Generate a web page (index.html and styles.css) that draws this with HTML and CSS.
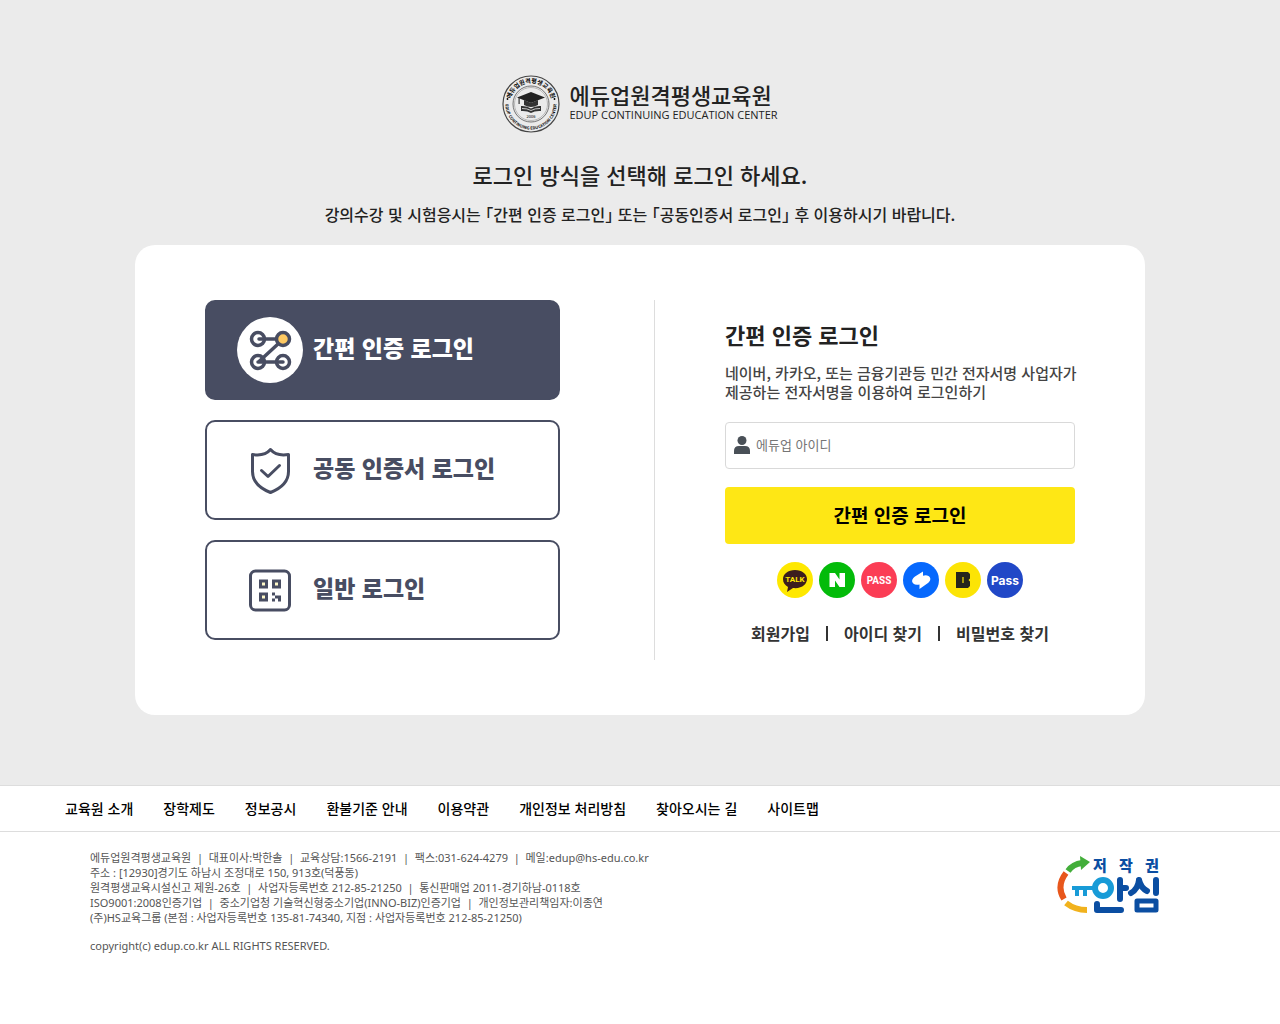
FILE: index.html
```
<!DOCTYPE html>
<html lang="ko">
<head>
    <meta charset="UTF-8">
    <meta name="viewport" content="width=device-width, initial-scale=1.0">
    <title>에듀업원격평생교육원 로그인</title>
    <link rel="stylesheet" href="styles.css">
</head>
<body>
    <main class="login">
        <a href="#" class="logo">
            <svg class="logo-mark" viewBox="0 0 58 58" aria-hidden="true">
                <defs>
                    <path id="arcTop" d="M8 29a21 21 0 0 1 42 0"/>
                    <path id="arcBottom" d="M3.500 29a25.500 25.500 0 0 0 51 0"/>
                </defs>
                <circle cx="29" cy="29" r="28" fill="none" stroke="#444" stroke-width="1.200"/>
                <circle cx="29" cy="29" r="18" fill="none" stroke="#555" stroke-width="0.800"/>
                <circle cx="29" cy="29" r="16.500" fill="none" stroke="#888" stroke-width="0.500"/>
                <text class="mark-kr"><textPath href="#arcTop" startOffset="50%" text-anchor="middle">에듀업원격평생교육원</textPath></text>
                <text class="mark-en"><textPath href="#arcBottom" startOffset="50%" text-anchor="middle">EDUP CONTINUING EDUCATION CENTER</textPath></text>
                <circle cx="5.500" cy="24" r="0.900"/>
                <circle cx="52.500" cy="24" r="0.900"/>
                <path d="M29 17 43 22.500 29 28 15 22.500z" fill="#222"/>
                <path d="M22 25v5q7 4 14 0v-5l-7 3zM16.500 23h1.200v6h-1.200z" fill="#333"/>
                <path d="M19 31q6-.5 10 2.500 4-3 10-2.500v5q-6-.5-10 2-4-2.500-10-2z" fill="#333"/>
                <path d="M20 33.500q5-.2 9 2 4-2.200 9-2" fill="none" stroke="#ebebeb" stroke-width="0.800"/>
                <text class="mark-year" x="29" y="43" text-anchor="middle">2006</text>
            </svg>
            <span class="logo-text">
                <strong>에듀업원격평생교육원</strong>
                <span>EDUP CONTINUING EDUCATION CENTER</span>
            </span>
        </a>

        <h1>로그인 방식을 선택해 로그인 하세요.</h1>
        <p class="guide">강의수강 및 시험응시는 「간편 인증 로그인」 또는 「공동인증서 로그인」 후 이용하시기 바랍니다.</p>

        <div class="card">
            <!-- 로그인 방식 -->
            <div class="methods">
                <button type="button" class="method active">
                    <svg viewBox="0 0 66 66" aria-hidden="true">
                        <circle cx="33" cy="33" r="33" fill="#fff"/>
                        <g fill="none" stroke="#484d62" stroke-width="3.500" stroke-linecap="round">
                            <circle cx="21" cy="22" r="6.500"/>
                            <circle cx="46" cy="22" r="6.500" fill="#ffca62"/>
                            <circle cx="21" cy="45" r="6.500"/>
                            <circle cx="46" cy="45" r="6.500"/>
                            <path d="M22 22h17M41 27 22 44.500M21 45h25"/>
                        </g>
                    </svg>
                    <span>간편 인증 로그인</span>
                </button>
                <button type="button" class="method">
                    <svg viewBox="0 0 66 66" aria-hidden="true">
                        <g fill="none" stroke="#484d62" stroke-width="3" stroke-linecap="round" stroke-linejoin="round">
                            <path d="M33.500 12.500q-6 7-18 5v17c0 10 8 17 18 21 10-4 18-11 18-21v-17q-12 2-18-5z"/>
                            <path d="M24.500 33.500 31 39.500 42.500 28.500"/>
                        </g>
                    </svg>
                    <span>공동 인증서 로그인</span>
                </button>
                <button type="button" class="method">
                    <svg viewBox="0 0 66 66" aria-hidden="true">
                        <g fill="none" stroke="#484d62" stroke-width="3">
                            <rect x="13.500" y="14" width="39" height="39" rx="5"/>
                            <rect x="23.500" y="24" width="6" height="6" fill="#fff9c8"/>
                            <rect x="36.500" y="24" width="6" height="6" fill="#fff9c8"/>
                            <rect x="23.500" y="37" width="6" height="6" fill="#fff9c8"/>
                        </g>
                        <path d="M35 35.500h3v3h-3zM38 38.500h6v6h-3v-3h-3zM35 41.500h3v3h-3z" fill="#484d62"/>
                    </svg>
                    <span>일반 로그인</span>
                </button>
            </div>

            <!-- 간편 인증 로그인 -->
            <form class="panel">
                <h2>간편 인증 로그인</h2>
                <p class="desc">네이버, 카카오, 또는 금융기관등 민간 전자서명 사업자가<br>제공하는 전자서명을 이용하여 로그인하기</p>

                <label class="field" for="userId">
                    <svg viewBox="0 0 16 18" role="img" aria-label="아이디">
                        <circle cx="8" cy="4.500" r="4.500"/>
                        <path d="M0 18v-3q0-5 5-5h6q5 0 5 5v3z"/>
                    </svg>
                    <input type="text" id="userId" name="userId" placeholder="에듀업 아이디">
                </label>
                <button type="submit" class="submit">간편 인증 로그인</button>

                <div class="providers">
                    <svg viewBox="0 0 36 36">
                        <circle cx="18" cy="18" r="18" fill="#fee800"/>
                        <path d="M18 8c-7 0-12 4-12 9 0 4 2 6 5 8l-1 5 6-4c9 1 14-4 14-9S25 8 18 8z" fill="#3c1e1e"/>
                        <text class="talk" x="18" y="20">TALK</text>
                    </svg>
                    <svg viewBox="0 0 36 36">
                        <circle cx="18" cy="18" r="18" fill="#03bb0a"/>
                        <path d="M10.500 11h5.500l4.500 6.500V11H26v14h-5.500L16 18.500V25h-5.500z" fill="#fff"/>
                    </svg>
                    <svg viewBox="0 0 36 36">
                        <circle cx="18" cy="18" r="18" fill="#fb3d55"/>
                        <text class="pass-red" x="18" y="22">PASS</text>
                    </svg>
                    <svg viewBox="0 0 36 36">
                        <circle cx="18" cy="18" r="18" fill="#0668fd"/>
                        <path d="M20 9.500v4.300q3-1.300 5.500.2c3 2 2 5-.5 7l-8.500 6V22.500q-4 1-6.200-1c-2.300-2.500-.8-5 1.700-7z" fill="#fff"/>
                    </svg>
                    <svg viewBox="0 0 36 36">
                        <circle cx="18" cy="18" r="18" fill="#fce405"/>
                        <path d="M11 10h12l2 2v4.500L23.500 18l1.500 1.500V24l-2 2H11z" fill="#24251c"/>
                        <path d="M18 15v6" stroke="#fce405" stroke-width="1.200"/>
                    </svg>
                    <svg viewBox="0 0 36 36">
                        <circle cx="18" cy="18" r="18" fill="#2148c7"/>
                        <text class="pass-blue" x="18" y="23">Pass</text>
                    </svg>
                </div>

                <nav class="links">
                    <a href="#">회원가입</a>
                    <a href="#">아이디 찾기</a>
                    <a href="#">비밀번호 찾기</a>
                </nav>
            </form>
        </div>
    </main>

    <footer>
        <nav class="footer-nav">
            <a href="#">교육원 소개</a>
            <a href="#">장학제도</a>
            <a href="#">정보공시</a>
            <a href="#">환불기준 안내</a>
            <a href="#">이용약관</a>
            <a href="#">개인정보 처리방침</a>
            <a href="#">찾아오시는 길</a>
            <a href="#">사이트맵</a>
        </nav>
        <div class="footer-info">
            <div>
                <address>
                    에듀업원격평생교육원 &nbsp;|&nbsp; 대표이사:박한솔 &nbsp;|&nbsp; 교육상담:1566-2191 &nbsp;|&nbsp; 팩스:031-624-4279 &nbsp;|&nbsp; 메일:edup@hs-edu.co.kr<br>
                    주소 : [12930]경기도 하남시 조정대로 150, 913호(덕풍동)<br>
                    원격평생교육시설신고 제원-26호 &nbsp;|&nbsp; 사업자등록번호 212-85-21250 &nbsp;|&nbsp; 통신판매업 2011-경기하남-0118호<br>
                    ISO9001:2008인증기업 &nbsp;|&nbsp; 중소기업청 기술혁신형중소기업(INNO-BIZ)인증기업 &nbsp;|&nbsp; 개인정보관리책임자:이종연<br>
                    (주)HS교육그룹 (본점 : 사업자등록번호 135-81-74340, 지점 : 사업자등록번호 212-85-21250)
                </address>
                <p class="copyright">copyright(c) edup.co.kr ALL RIGHTS RESERVED.</p>
            </div>
            <svg class="safe" viewBox="0 0 104 62">
                <g fill="none" stroke-width="6">
                    <path d="M12 18Q17 11 26 10" stroke="#43ae3a"/>
                    <path d="M10 20Q0 33 8 46" stroke="#e8571c"/>
                    <path d="M10 50Q19 57 31 57" stroke="#f1b21d"/>
                </g>
                <path d="M24 3 34 9 25 17z" fill="#43ae3a"/>
                <path d="M40 33v4H31v6h-4v-6h-4v6h-4v-6h-3v-4z" fill="#189bd7"/>
                <circle cx="47" cy="35" r="8" fill="none" stroke="#189bd7" stroke-width="6"/>
                <g fill="none" stroke="#0b4ea2" stroke-width="6" stroke-linecap="round" stroke-linejoin="round">
                    <path d="M64 27v19M65 35h5M41 51v6h24"/>
                    <path d="M83 27q-1 9-8 13M83 27q2 8 8 11M100 27v13"/>
                    <path d="M81 48h19v9H81z" stroke-width="5"/>
                </g>
                <text x="37" y="18">저</text>
                <text x="63" y="18">작</text>
                <text x="89" y="18">권</text>
            </svg>
        </div>
    </footer>
</body>
</html>
```

FILE: styles.css
```
* {
    box-sizing: border-box;
}

body {
    margin: 0;
    background-color: #fff;
    color: #222;
    font-family: "Noto Sans CJK KR", sans-serif;
}

h1, h2, p {
    margin: 0;
}

a {
    color: inherit;
    text-decoration: none;
}

button, input {
    font-family: inherit;
}

.login {
    display: flex;
    flex-direction: column;
    align-items: center;
    padding: 75px 20px 70px;
    background-color: #ebebeb;
}

/* Logo */
.logo {
    display: flex;
    align-items: center;
    gap: 9px;
}

.logo-mark {
    width: 58px;
    height: 58px;
}

.mark-kr {
    font-size: 6px;
    font-weight: bold;
}

.mark-en {
    font-size: 4px;
    font-weight: bold;
}

.mark-year {
    font-size: 4px;
}

.logo-text {
    display: flex;
    flex-direction: column;
    padding-bottom: 2px;
    font-family: "Open Sans", sans-serif;
    font-size: 11px;
    line-height: 18px;
}

.logo-text strong {
    font-family: "Noto Sans CJK KR", sans-serif;
    font-size: 22px;
    font-weight: 500;
    line-height: 24px;
}

h1 {
    margin-top: 23px;
    font-size: 22px;
    font-weight: 500;
    line-height: 36px;
}

.guide {
    margin-top: 10px;
    font-size: 16px;
    font-weight: 500;
    line-height: 24px;
    font-feature-settings: "halt";
}

/* Card */
.card {
    display: flex;
    justify-content: space-between;
    width: 100%;
    max-width: 1010px;
    margin-top: 19px;
    padding: 55px 70px;
    background-color: #fff;
    border-radius: 20px;
}

.methods {
    display: flex;
    flex-direction: column;
    gap: 20px;
    width: 355px;
}

.method {
    display: flex;
    align-items: center;
    gap: 10px;
    height: 100px;
    padding: 0 30px;
    border: 2px solid #484d62;
    border-radius: 10px;
    background-color: #fff;
    color: #484d62;
    font-size: 23px;
    font-weight: 900;
    cursor: pointer;
}

.method svg {
    width: 66px;
    height: 66px;
}

.method span {
    padding-bottom: 6px;
}

.method.active {
    background-color: #484d62;
    color: #fff;
}

.panel {
    width: 421px;
    height: 360px;
    padding: 19px 0 0 70px;
    border-left: 1px solid #ddd;
}

h2 {
    font-size: 22px;
    font-weight: bold;
    line-height: 30px;
}

.desc {
    margin: 14px 0 21px;
    color: #444;
    font-size: 15px;
    font-weight: 500;
    line-height: 19px;
    white-space: nowrap;
}

.field {
    display: flex;
    align-items: center;
    gap: 6px;
    height: 47px;
    padding: 0 8px 2px;
    border: 1px solid #d9d9d9;
    border-radius: 4px;
}

.field svg {
    width: 16px;
    height: 18px;
    fill: #495057;
}

.field input {
    flex: 1;
    padding: 0;
    border: none;
    outline: none;
    font-size: 13px;
}

.field input::placeholder {
    color: #757575;
}

.submit {
    width: 100%;
    height: 57px;
    margin-top: 18px;
    padding-bottom: 4px;
    border: none;
    border-radius: 4px;
    background-color: #fee715;
    color: #000;
    font-size: 19px;
    font-weight: bold;
    cursor: pointer;
}

.providers {
    display: flex;
    justify-content: center;
    gap: 6px;
    margin-top: 18px;
}

.providers svg {
    width: 36px;
    height: 36px;
}

.providers text {
    fill: #fff;
    text-anchor: middle;
    font-weight: bold;
}

.providers .talk {
    fill: #fee800;
    font-family: Roboto, sans-serif;
    font-size: 8px;
}

.providers .pass-red {
    font-family: Roboto, sans-serif;
    font-size: 10px;
}

.providers .pass-blue {
    font-family: Inter, sans-serif;
    font-size: 12px;
}

.links {
    display: flex;
    justify-content: center;
    margin-top: 23px;
    color: #333;
    font-size: 16px;
    font-weight: bold;
    line-height: 24px;
}

.links a {
    display: flex;
    align-items: center;
}

.links a + a::before {
    content: "";
    height: 15px;
    margin: 0 16px;
    border-left: 2px solid #333;
}

/* Footer */
.footer-nav {
    display: flex;
    flex-wrap: wrap;
    gap: 0 30px;
    padding: 11px 65px;
    border-top: 1px solid #ddd;
    border-bottom: 1px solid #ddd;
    color: #000;
    font-size: 14px;
    font-weight: 500;
    line-height: 23px;
}

.footer-info {
    display: flex;
    justify-content: space-between;
    align-items: flex-start;
    padding: 18px 120px 18px 90px;
    color: #555;
    font-family: "Noto Sans", "Noto Sans CJK KR", sans-serif;
    font-size: 11px;
    line-height: 15px;
}

address {
    font-style: normal;
}

.copyright {
    margin-top: 13px;
}

.safe {
    width: 104px;
    height: 62px;
    margin-top: 3px;
}

.safe text {
    fill: #0b4ea2;
    font-family: "Noto Sans CJK KR", sans-serif;
    font-size: 15px;
    font-weight: 900;
}
```
